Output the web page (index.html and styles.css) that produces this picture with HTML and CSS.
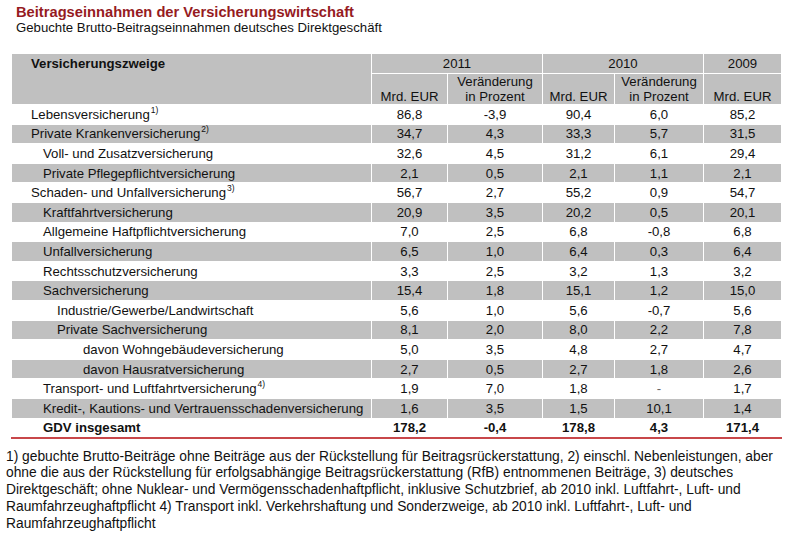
FILE: index.html
```html
<!DOCTYPE html>
<html lang="de">
<head>
<meta charset="utf-8">
<title>Beitragseinnahmen der Versicherungswirtschaft</title>
<link rel="stylesheet" href="styles.css">
</head>
<body>
<div class="page">
  <header class="head">
    <h1 class="title">Beitragseinnahmen der Versicherungswirtschaft</h1>
    <p class="subtitle">Gebuchte Brutto-Beitragseinnahmen deutsches Direktgeschäft</p>
  </header>

  <table class="data">
    <colgroup>
      <col class="c-label">
      <col class="c-a">
      <col class="c-b">
      <col class="c-c">
      <col class="c-d">
      <col class="c-e">
    </colgroup>
    <thead>
      <tr class="h1">
        <th rowspan="2" class="h-label">Versicherungszweige</th>
        <th colspan="2" class="h-year">2011</th>
        <th colspan="2" class="h-year">2010</th>
        <th class="h-year">2009</th>
      </tr>
      <tr class="h2">
        <th class="h-sub">Mrd. EUR</th>
        <th class="h-sub">Veränderung<br>in Prozent</th>
        <th class="h-sub">Mrd. EUR</th>
        <th class="h-sub">Veränderung<br>in Prozent</th>
        <th class="h-sub">Mrd. EUR</th>
      </tr>
    </thead>
    <tbody>
      <tr><td class="l0">Lebensversicherung<sup>1)</sup></td><td>86,8</td><td>-3,9</td><td>90,4</td><td>6,0</td><td>85,2</td></tr>
      <tr class="g"><td class="l0">Private Krankenversicherung<sup>2)</sup></td><td>34,7</td><td>4,3</td><td>33,3</td><td>5,7</td><td>31,5</td></tr>
      <tr><td class="l1">Voll- und Zusatzversicherung</td><td>32,6</td><td>4,5</td><td>31,2</td><td>6,1</td><td>29,4</td></tr>
      <tr class="g"><td class="l1">Private Pflegepflichtversicherung</td><td>2,1</td><td>0,5</td><td>2,1</td><td>1,1</td><td>2,1</td></tr>
      <tr><td class="l0">Schaden- und Unfallversicherung<sup>3)</sup></td><td>56,7</td><td>2,7</td><td>55,2</td><td>0,9</td><td>54,7</td></tr>
      <tr class="g"><td class="l1">Kraftfahrtversicherung</td><td>20,9</td><td>3,5</td><td>20,2</td><td>0,5</td><td>20,1</td></tr>
      <tr><td class="l1">Allgemeine Haftpflichtversicherung</td><td>7,0</td><td>2,5</td><td>6,8</td><td>-0,8</td><td>6,8</td></tr>
      <tr class="g"><td class="l1">Unfallversicherung</td><td>6,5</td><td>1,0</td><td>6,4</td><td>0,3</td><td>6,4</td></tr>
      <tr><td class="l1">Rechtsschutzversicherung</td><td>3,3</td><td>2,5</td><td>3,2</td><td>1,3</td><td>3,2</td></tr>
      <tr class="g"><td class="l1">Sachversicherung</td><td>15,4</td><td>1,8</td><td>15,1</td><td>1,2</td><td>15,0</td></tr>
      <tr><td class="l2">Industrie/Gewerbe/Landwirtschaft</td><td>5,6</td><td>1,0</td><td>5,6</td><td>-0,7</td><td>5,6</td></tr>
      <tr class="g"><td class="l2">Private Sachversicherung</td><td>8,1</td><td>2,0</td><td>8,0</td><td>2,2</td><td>7,8</td></tr>
      <tr><td class="l3">davon Wohngebäudeversicherung</td><td>5,0</td><td>3,5</td><td>4,8</td><td>2,7</td><td>4,7</td></tr>
      <tr class="g"><td class="l3">davon Hausratversicherung</td><td>2,7</td><td>0,5</td><td>2,7</td><td>1,8</td><td>2,6</td></tr>
      <tr><td class="l1">Transport- und Luftfahrtversicherung<sup>4)</sup></td><td>1,9</td><td>7,0</td><td>1,8</td><td class="dash">-</td><td>1,7</td></tr>
      <tr class="g"><td class="l1">Kredit-, Kautions- und Vertrauensschadenversicherung</td><td>1,6</td><td>3,5</td><td>1,5</td><td>10,1</td><td>1,4</td></tr>
      <tr class="total"><td class="l1">GDV insgesamt</td><td>178,2</td><td>-0,4</td><td>178,8</td><td>4,3</td><td>171,4</td></tr>
    </tbody>
  </table>

  <p class="notes">1) gebuchte Brutto-Beiträge ohne Beiträge aus der Rückstellung für Beitragsrückerstattung, 2) einschl. Nebenleistungen, aber<br>ohne die aus der Rückstellung für erfolgsabhängige Beitragsrückerstattung (RfB) entnommenen Beiträge, 3) deutsches<br>Direktgeschäft; ohne Nuklear- und Vermögensschadenhaftpflicht, inklusive Schutzbrief, ab 2010 inkl. Luftfahrt-, Luft- und<br>Raumfahrzeughaftpflicht 4) Transport inkl. Verkehrshaftung und Sonderzweige, ab 2010 inkl. Luftfahrt-, Luft- und<br>Raumfahrzeughaftpflicht</p>
</div>
</body>
</html>
```

FILE: styles.css
```css
html, body {
  margin: 0;
  padding: 0;
  background: #ffffff;
}

body {
  font-family: "Liberation Sans", Arial, sans-serif;
  color: #111111;
}

.page {
  width: 795px;
  height: 533px;
  overflow: hidden;
}

.head {
  padding: 4px 0 0 16px;
}

.title {
  margin: 0;
  font-size: 14.7px;
  line-height: 16px;
  font-weight: bold;
  color: #961b1f;
}

.subtitle {
  margin: 0;
  font-size: 13.2px;
  line-height: 15px;
  color: #111111;
}

.data {
  margin: 18px 0 0 11px;
  width: 770px;
  table-layout: fixed;
  border-collapse: collapse;
  font-size: 13.2px;
  line-height: 15px;
}

.c-label { width: 360px; }
.c-a { width: 76px; }
.c-b { width: 95px; }
.c-c { width: 72px; }
.c-d { width: 89px; }
.c-e { width: 78px; }

.data th,
.data td {
  border: 1px solid #ffffff;
  padding: 0;
}

.data thead th {
  background: #c0c0c0;
  font-weight: normal;
  text-align: center;
}

.h1 { height: 20px; }
.h2 { height: 30px; }

.data th.h-label {
  text-align: left;
  vertical-align: top;
  font-weight: bold;
  padding: 2px 0 0 19px;
}

.h-year {
  vertical-align: middle;
  padding-top: 1px;
}

.h-sub {
  vertical-align: bottom;
  padding-bottom: 0;
}

.data tbody tr {
  height: 19.6px;
}

.data tbody td {
  text-align: center;
  vertical-align: middle;
  white-space: nowrap;
}

.data tbody tr.g td {
  background: #c0c0c0;
}

.data tbody td.l0 { text-align: left; padding-left: 19px; }
.data tbody td.l1 { text-align: left; padding-left: 31px; }
.data tbody td.l2 { text-align: left; padding-left: 45px; }
.data tbody td.l3 { text-align: left; padding-left: 71px; }

.data sup {
  font-size: 8.5px;
  line-height: 0;
  vertical-align: 6px;
  margin-left: 1px;
}

.data tr.total td {
  font-weight: bold;
  border-bottom: 2px solid #c8474a;
}

.dash {
  color: #666666;
}

.notes {
  margin: 10px 0 0 6px;
  font-size: 13.8px;
  line-height: 16.8px;
  white-space: nowrap;
  color: #111111;
}
```
